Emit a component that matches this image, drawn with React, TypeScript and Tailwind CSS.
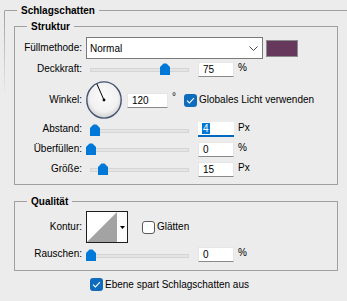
import React from "react";

const Thumb = ({ left }: { left: number }) => (
  <svg className="absolute top-0" style={{ left }} width="10" height="12" viewBox="0 0 10 12">
    <polygon points="0,4 3.5,0.5 6.5,0.5 10,4 10,12 0,12" fill="#0078d7" />
  </svg>
);

const Slider = ({ thumb }: { thumb: number }) => (
  <div className="relative ml-[4px] w-[107px] h-[12px] shrink-0">
    <div className="absolute left-[4px] top-[5px] w-[99px] h-[4px] bg-[#e4e4e4] border border-[#d5d5d5]" />
    <Thumb left={thumb} />
  </div>
);

const Label = ({ children }: { children: React.ReactNode }) => (
  <div className="w-[67px] shrink-0 text-right pb-[2px] whitespace-nowrap">{children}</div>
);

const NumInput = ({
  value,
  w = "w-[36px]",
  ml = "ml-[5px]",
  focused = false,
}: {
  value: string;
  w?: string;
  ml?: string;
  focused?: boolean;
}) =>
  focused ? (
    <div className={`${ml} ${w} h-[15px] shrink-0 bg-white border-b-2 border-[#0067c0] flex items-center pl-[4px]`}>
      <span className="bg-[#0078d7] text-white px-[1px] leading-[11px]">{value}</span>
    </div>
  ) : (
    <div className={`${ml} ${w} h-[15px] shrink-0 bg-white border border-[#e6e6e6] border-b-[#8a8a8a] flex items-center pl-[4px]`}>
      {value}
    </div>
  );

const Unit = ({ children }: { children: React.ReactNode }) => (
  <div className="ml-[4px] pb-[4px] whitespace-nowrap">{children}</div>
);

const Check = ({ checked }: { checked: boolean }) =>
  checked ? (
    <div className="w-[13px] h-[13px] shrink-0 rounded-[3px] bg-[#0f6cbd] flex items-center justify-center">
      <svg width="9" height="7" viewBox="0 0 9 7">
        <path d="M1 3.6 L3.4 6 L8 1.2" stroke="white" strokeWidth="1.1" fill="none" />
      </svg>
    </div>
  ) : (
    <div className="w-[13px] h-[13px] shrink-0 rounded-[3px] bg-white border border-[#5a5a5a]" />
  );

const Dial = () => (
  <svg className="ml-[4px] shrink-0" width="36" height="38" viewBox="0 0 36 38">
    <defs>
      <radialGradient id="dg" cx="50%" cy="42%" r="58%">
        <stop offset="0%" stopColor="#fbfbfb" />
        <stop offset="70%" stopColor="#f1f1f1" />
        <stop offset="100%" stopColor="#cfcfcf" />
      </radialGradient>
    </defs>
    <ellipse cx="18" cy="19" rx="17.2" ry="18.1" fill="url(#dg)" stroke="#43536f" strokeWidth="1.4" />
    <line x1="18" y1="19" x2="10.8" y2="2.8" stroke="#000" strokeWidth="1" />
    <circle cx="18" cy="19" r="1.4" fill="#000" />
  </svg>
);

export default function App() {
  return (
    <div className="w-[347px] h-[301px] overflow-hidden bg-[#ececec] text-[10px] leading-[13px] text-black font-['Liberation_Sans',Arial,sans-serif]">
      <div className="relative ml-[4px] mt-[10px] w-[360px] h-[320px] border-t border-l border-[#a0a0a0] border-l-transparent">
        <div className="absolute left-[-1px] top-0 w-[1px] h-[85px] bg-linear-to-b from-[#a0a0a0] to-[#ececec]" />
        <div className="absolute left-[12px] top-[-7px] px-[4px] bg-[#ececec] font-bold">Schlagschatten</div>

        {/* Struktur */}
        <div className="relative ml-[9px] mt-[15px] w-[324px] h-[159px] border border-[#a0a0a0]">
          <div className="absolute left-[12px] top-[-7px] px-[4px] bg-[#ececec] font-bold">Struktur</div>
          <div className="flex flex-col pt-[10px]">
            <div className="flex items-center h-[22px]">
              <Label>Füllmethode:</Label>
              <div className="ml-[4px] w-[177px] h-[22px] shrink-0 bg-white border border-[#7a7a7a] flex items-center justify-between pl-[3px] pr-[4px]">
                <span>Normal</span>
                <svg width="9" height="5" viewBox="0 0 9 5">
                  <path d="M0.5 0.5 L4.5 4.5 L8.5 0.5" stroke="#4a4a4a" strokeWidth="1" fill="none" />
                </svg>
              </div>
              <div className="ml-[3px] w-[32px] h-[17px] shrink-0 bg-[#66395c] border border-[#8c8c8c]" />
            </div>

            <div className="flex items-center h-[20px]">
              <Label>Deckkraft:</Label>
              <Slider thumb={74} />
              <NumInput value="75" />
              <Unit>%</Unit>
            </div>

            <div className="flex items-center h-[40px] mt-[1px]">
              <Label>Winkel:</Label>
              <Dial />
              <NumInput value="120" w="w-[41px]" ml="ml-[5px]" />
              <div className="ml-[4px] self-start mt-[10px]">°</div>
              <div className="ml-[8px] flex items-center">
                <Check checked />
                <span className="ml-[2px] pb-[1px]">Globales Licht verwenden</span>
              </div>
            </div>

            <div className="flex items-center h-[19px]">
              <Label>Abstand:</Label>
              <Slider thumb={4} />
              <NumInput value="4" focused />
              <Unit>Px</Unit>
            </div>

            <div className="flex items-center h-[20px]">
              <Label>Überfüllen:</Label>
              <Slider thumb={0} />
              <NumInput value="0" />
              <Unit>%</Unit>
            </div>

            <div className="flex items-center h-[20px]">
              <Label>Größe:</Label>
              <Slider thumb={12} />
              <NumInput value="15" />
              <Unit>Px</Unit>
            </div>
          </div>
        </div>

        {/* Qualität */}
        <div className="relative ml-[9px] mt-[16px] w-[324px] h-[70px] border border-[#a0a0a0]">
          <div className="absolute left-[12px] top-[-7px] px-[4px] bg-[#ececec] font-bold">Qualität</div>
          <div className="flex flex-col pt-[9px]">
            <div className="flex items-center h-[32px]">
              <Label>Kontur:</Label>
              <div className="ml-[4px] flex w-[42px] h-[32px] shrink-0 border border-[#1e1e1e] bg-white">
                <svg width="30" height="30" viewBox="0 0 30 30" className="block shrink-0">
                  <rect width="30" height="30" fill="#ffffff" />
                  <polygon points="0,30 30,0 30,30" fill="#a3a3a3" />
                </svg>
                <div className="flex-1 flex items-center justify-center bg-[#fbfbfb]">
                  <svg width="5" height="3" viewBox="0 0 5 3">
                    <polygon points="0,0 5,0 2.5,3" fill="#000" />
                  </svg>
                </div>
              </div>
              <div className="ml-[14px] flex items-center">
                <Check checked={false} />
                <span className="ml-[2px] pb-[1px]">Glätten</span>
              </div>
            </div>
            <div className="flex items-center h-[21px] mt-[1px]">
              <Label>Rauschen:</Label>
              <Slider thumb={0} />
              <NumInput value="0" />
              <Unit>%</Unit>
            </div>
          </div>
        </div>

        <div className="flex items-center h-[13px] mt-[7px] pl-[85px]">
          <Check checked />
          <span className="ml-[2px] pb-[1px]">Ebene spart Schlagschatten aus</span>
        </div>
      </div>
    </div>
  );
}
